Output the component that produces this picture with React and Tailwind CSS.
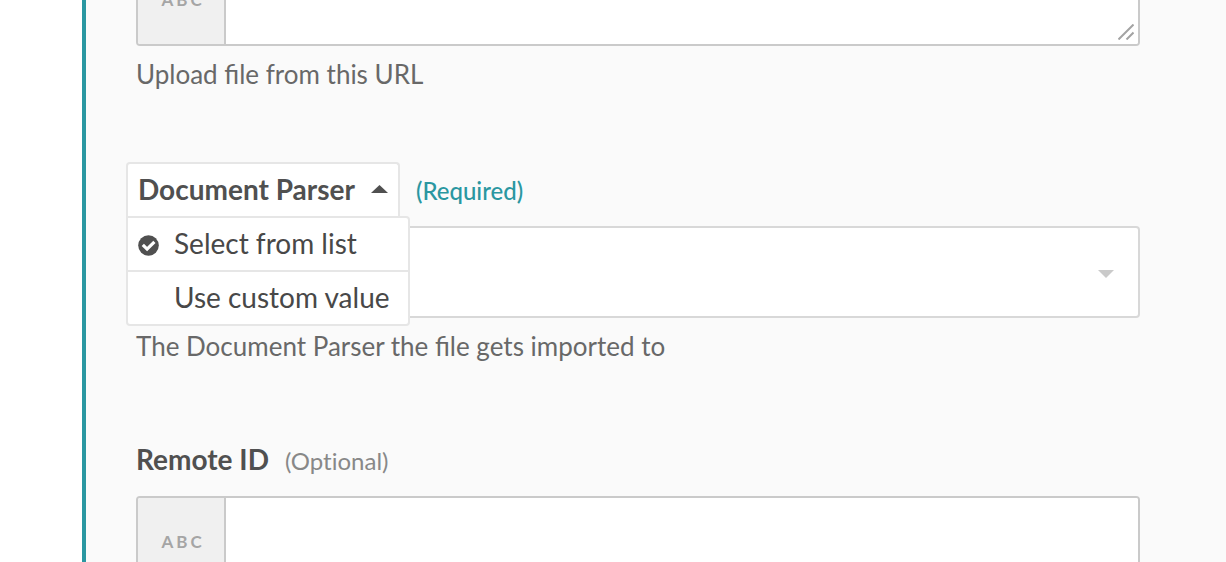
import { useState } from 'react';

function TypeBadge() {
  return (
    <span className="flex w-[88px] shrink-0 items-center justify-center border-r-2 border-[#cacaca] bg-[#f0f0f0] pl-1 text-[17px] font-bold tracking-[3px] text-[#a5a5a5]">
      ABC
    </span>
  );
}

function TextField({ id, label, resizable }) {
  return (
    <div className="relative flex h-[92px] overflow-hidden rounded-[4px] border-2 border-[#cacaca] bg-white">
      <TypeBadge />
      <textarea
        id={id}
        aria-label={label}
        className="block min-w-0 flex-1 resize-none bg-white p-4 text-[28px] text-[#505050] outline-none"
      />
      {resizable && (
        <svg
          className="pointer-events-none absolute right-1 bottom-1 size-4"
          viewBox="0 0 16 16"
          fill="none"
          stroke="#a3a3a3"
          strokeWidth="2"
          aria-hidden="true"
        >
          <path d="M0.5 15.5 15.5 0.5M8.5 15.5 15.5 8.5" />
        </svg>
      )}
    </div>
  );
}

function Help({ children }) {
  return <p className="pt-[10px] text-[26px] leading-9 text-[#686868]">{children}</p>;
}

const modes = ['Select from list', 'Use custom value'];

function ModeMenu() {
  const [open, setOpen] = useState(true);
  const [mode, setMode] = useState(modes[0]);
  return (
    <div className="relative -ml-[10px]">
      <button
        type="button"
        aria-haspopup="menu"
        aria-expanded={open}
        onClick={() => setOpen(!open)}
        className="flex h-[54px] items-center gap-4 rounded-t-[4px] border-2 border-b-0 border-[#e6e6e6] bg-white px-[10px] pb-[2px] text-[28px] font-bold text-[#505050]"
      >
        Document Parser
        <svg className="h-2 w-[17px]" viewBox="0 0 17 8" fill="currentColor" aria-hidden="true">
          <path d="M8.5 0 17 8H0z" />
        </svg>
      </button>
      {open && (
        <div
          role="menu"
          className="absolute top-full left-0 z-10 flex flex-col divide-y-2 divide-[#e6e6e6] rounded-[4px] rounded-tl-none border-2 border-[#e6e6e6] bg-white"
        >
          {modes.map((item) => (
            <button
              key={item}
              type="button"
              role="menuitemradio"
              aria-checked={item === mode}
              onClick={() => setMode(item)}
              className="box-content flex h-[50px] items-center pr-[18px] pb-[2px] pl-[10px] text-[28px] whitespace-nowrap text-[#484848]"
            >
              <span className="w-9 pt-1">
                {item === mode && (
                  <svg className="size-[21px]" viewBox="0 0 21 21" aria-hidden="true">
                    <circle cx="10.5" cy="10.5" r="10.3" fill="#505050" />
                    <path d="M4.8 9.9 9.1 14.1 16.4 6.9" fill="none" stroke="#fff" strokeWidth="3.2" />
                  </svg>
                )}
              </span>
              {item}
            </button>
          ))}
        </div>
      )}
    </div>
  );
}

export default function App() {
  return (
    <div className="flex h-screen overflow-hidden bg-white pl-[82px] font-['Lato',sans-serif]">
      <form className="flow-root min-w-0 flex-1 border-l-4 border-[#2a97a1] bg-[#fafafa] pr-[86px] pl-[50px]">
        <section className="-mt-[46px] h-[208px]">
          <TextField id="url" label="URL" resizable />
          <Help>Upload file from this URL</Help>
        </section>

        <section className="h-[270px]">
          <div className="flex h-16 items-start gap-4">
            <ModeMenu />
            <span className="pt-[2px] text-2xl leading-[54px] font-medium text-[#2a97a1]">(Required)</span>
          </div>
          <div className="relative">
            <select
              aria-label="Document Parser"
              className="block h-[92px] w-full appearance-none rounded-[4px] border-2 border-[#d8d8d8] bg-white px-6 text-[28px] text-[#505050] outline-none"
            >
              <option value="" />
            </select>
            <svg
              className="pointer-events-none absolute top-11 right-[26px] h-2 w-4"
              viewBox="0 0 16 8"
              fill="#cacaca"
              aria-hidden="true"
            >
              <path d="M0 0h16L8 8z" />
            </svg>
          </div>
          <Help>The Document Parser the file gets imported to</Help>
        </section>

        <section>
          <div className="flex h-16 items-start gap-4">
            <label htmlFor="remote-id" className="text-[28px] leading-[54px] font-bold text-[#505050]">
              Remote ID
            </label>
            <span className="pt-[2px] text-2xl leading-[54px] text-[#888888] [font-variant-ligatures:none]">
              (Optional)
            </span>
          </div>
          <TextField id="remote-id" label="Remote ID" />
        </section>
      </form>
    </div>
  );
}
